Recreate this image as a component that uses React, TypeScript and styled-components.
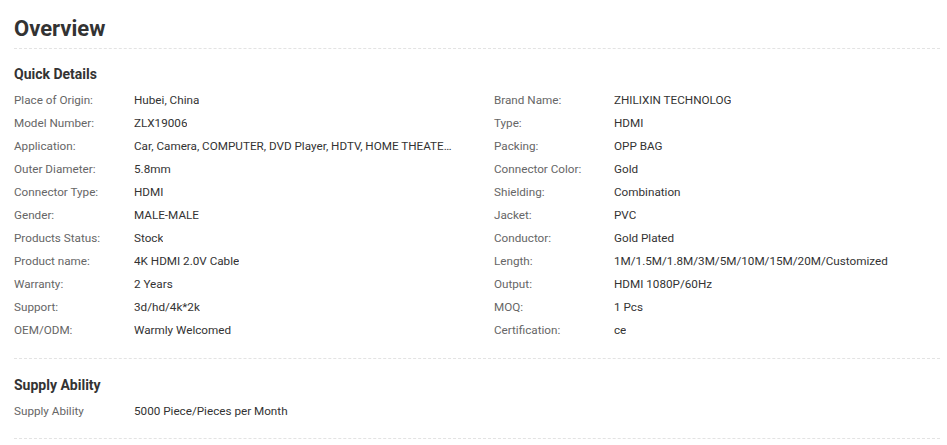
import React from "react";
import styled, { createGlobalStyle } from "styled-components";

const Global = createGlobalStyle`
  html, body { margin: 0; padding: 0; background: #fff; }
  body { font-family: Roboto, "Liberation Sans", Arial, sans-serif; color: #333; }
`;

const Page = styled.div`
  width: 926px;
  padding: 14px 0 0 14px;
`;

const Title = styled.h2`
  margin: 0;
  font-size: 22px;
  line-height: 30px;
  font-weight: 700;
  color: #333;
  padding-bottom: 4px;
  border-bottom: 1px dashed #e3e3e3;
`;

const Section = styled.section<{ $first?: boolean }>`
  padding: ${(p) => (p.$first ? "15px 0 16px" : "16px 0 15px")};
  border-bottom: 1px dashed #e3e3e3;
`;

const SectionTitle = styled.h3`
  margin: 0 0 5px;
  font-size: 14px;
  line-height: 20px;
  font-weight: 700;
  color: #333;
`;

const Grid = styled.div`
  display: grid;
  grid-template-columns: 480px 1fr;
`;

const Item = styled.div`
  display: flex;
  font-size: 11.7px;
  line-height: 23px;
  min-width: 0;
`;

const Label = styled.span`
  flex: 0 0 120px;
  color: #666;
`;

const Value = styled.span`
  flex: 0 1 auto;
  max-width: 322px;
  color: #333;
  white-space: nowrap;
  overflow: hidden;
  text-overflow: ellipsis;
`;

const left: [string, string][] = [
  ["Place of Origin:", "Hubei, China"],
  ["Model Number:", "ZLX19006"],
  ["Application:", "Car, Camera, COMPUTER, DVD Player, HDTV, HOME THEATER, Multimedia"],
  ["Outer Diameter:", "5.8mm"],
  ["Connector Type:", "HDMI"],
  ["Gender:", "MALE-MALE"],
  ["Products Status:", "Stock"],
  ["Product name:", "4K HDMI 2.0V Cable"],
  ["Warranty:", "2 Years"],
  ["Support:", "3d/hd/4k*2k"],
  ["OEM/ODM:", "Warmly Welcomed"],
];

const right: [string, string][] = [
  ["Brand Name:", "ZHILIXIN TECHNOLOG"],
  ["Type:", "HDMI"],
  ["Packing:", "OPP BAG"],
  ["Connector Color:", "Gold"],
  ["Shielding:", "Combination"],
  ["Jacket:", "PVC"],
  ["Conductor:", "Gold Plated"],
  ["Length:", "1M/1.5M/1.8M/3M/5M/10M/15M/20M/Customized"],
  ["Output:", "HDMI 1080P/60Hz"],
  ["MOQ:", "1 Pcs"],
  ["Certification:", "ce"],
];

export default function App() {
  return (
    <>
      <Global />
      <Page>
        <Title>Overview</Title>
        <Section $first>
          <SectionTitle>Quick Details</SectionTitle>
          <Grid>
            {left.map((l, i) => (
              <React.Fragment key={i}>
                <Item>
                  <Label>{l[0]}</Label>
                  <Value>{l[1]}</Value>
                </Item>
                <Item>
                  <Label>{right[i][0]}</Label>
                  <Value>{right[i][1]}</Value>
                </Item>
              </React.Fragment>
            ))}
          </Grid>
        </Section>
        <Section>
          <SectionTitle>Supply Ability</SectionTitle>
          <Grid>
            <Item>
              <Label>Supply Ability</Label>
              <Value>5000 Piece/Pieces per Month</Value>
            </Item>
          </Grid>
        </Section>
      </Page>
    </>
  );
}
